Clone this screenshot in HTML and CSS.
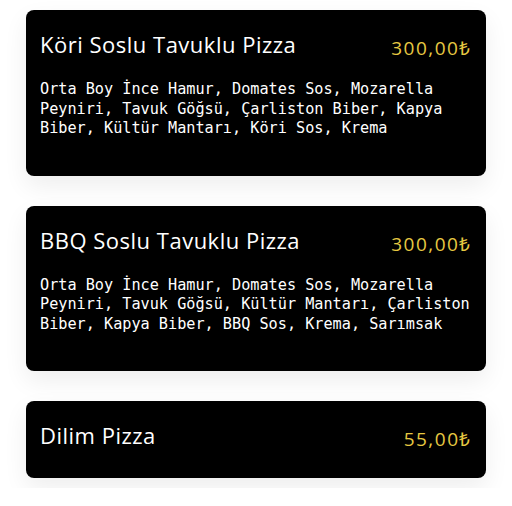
FILE: index.html
```html
<!DOCTYPE html>
<html lang="tr">
<head>
    <meta charset="UTF-8">
    <meta name="viewport" content="width=device-width, initial-scale=1.0">
    <title>Pizzalar</title>
    <link rel="stylesheet" href="styles.css">
</head>
<body>
    <div class="menu-list">
        <div class="menu-item">
            <div class="item-head">
                <h2 class="item-name">Köri Soslu Tavuklu Pizza</h2>
                <span class="item-price">300,00₺</span>
            </div>
            <p class="item-desc">Orta Boy İnce Hamur, Domates Sos, Mozarella Peyniri, Tavuk Göğsü, Çarliston Biber, Kapya Biber, Kültür Mantarı, Köri Sos, Krema</p>
        </div>
        <div class="menu-item">
            <div class="item-head">
                <h2 class="item-name">BBQ Soslu Tavuklu Pizza</h2>
                <span class="item-price">300,00₺</span>
            </div>
            <p class="item-desc">Orta Boy İnce Hamur, Domates Sos, Mozarella Peyniri, Tavuk Göğsü, Kültür Mantarı, Çarliston Biber, Kapya Biber, BBQ Sos, Krema, Sarımsak</p>
        </div>
        <div class="menu-item">
            <div class="item-head">
                <h2 class="item-name">Dilim Pizza</h2>
                <span class="item-price">55,00₺</span>
            </div>
        </div>
    </div>
</body>
</html>
```

FILE: styles.css
```css
body, html {
    margin: 0;
    background: #ffffff;
    font-family: 'Open Sans', sans-serif;
}
.menu-list {
    display: flex;
    flex-direction: column;
    gap: 30px;
    padding: 10px 26px;
}
.menu-item {
    background: #000;
    color: #fff;
    border-radius: 8px;
    padding: 20px 14px 29px;
    box-shadow: 0 10px 24px rgba(0, 0, 0, 0.07);
}
.item-head {
    display: flex;
    justify-content: space-between;
    align-items: baseline;
}
.item-name {
    margin: 0;
    font-size: 22px;
    font-weight: 500;
    letter-spacing: 0.5px;
    line-height: 28px;
}
.item-price {
    position: relative;
    top: 2px;
    color: #e6c842;
    font-size: 19px;
    font-weight: 400;
    letter-spacing: 1.5px;
    line-height: 1;
}
.item-desc {
    margin: 22px 0 8px;
    font-family: 'DejaVu Sans Mono', monospace;
    font-size: 15.2px;
    line-height: 19.5px;
}
```
